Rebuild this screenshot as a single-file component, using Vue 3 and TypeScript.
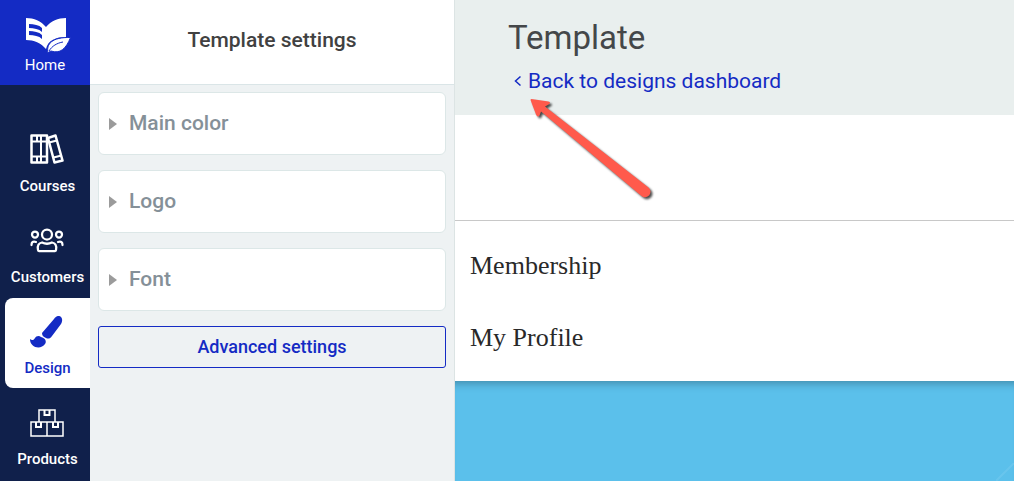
<script setup lang="ts">
interface NavItem {
  id: string
  label: string
  active?: boolean
}

const navItems: NavItem[] = [
  { id: 'courses', label: 'Courses' },
  { id: 'customers', label: 'Customers' },
  { id: 'design', label: 'Design', active: true },
  { id: 'products', label: 'Products' },
]

const sections: string[] = ['Main color', 'Logo', 'Font']
const menuLinks: string[] = ['Membership', 'My Profile']
</script>

<template>
  <div class="page">
    <nav class="sidebar">
      <a class="home" href="#">
        <svg class="home-icon" width="45" height="37" viewBox="0 0 45 37" aria-hidden="true">
          <path fill="#fff" d="M0 1C8 1 15 4 20 10C25 4 32 1 40 1V20C30 20 22 23 20 32C15 26 8 23 0 23Z" />
          <path fill="#142bc4" d="M3 7C8 7 13 8 16 11V15C13 12 8 11 3 11ZM3 14C8 14 13 15 16 18V22C13 19 8 18 3 18Z" />
          <path fill="#fff" stroke="#142bc4" stroke-width="1" d="M22 36C20 27 26 20 44.500 20.500C40 32 34 37 25 34C23.500 34.500 23 35 22 36Z" />
          <path fill="none" stroke="#142bc4" stroke-width="1" d="M23 34C26 29 31 26 37 25" />
        </svg>
        <span>Home</span>
      </a>
      <div class="nav-list">
        <a v-for="item in navItems" :key="item.id" class="nav-item" :class="{ active: item.active }" href="#">
          <svg v-if="item.id === 'courses'" class="icon" width="34" height="32" viewBox="0 0 34 32" fill="none" stroke="#fff" stroke-width="2" stroke-linejoin="round" aria-hidden="true">
            <path stroke-width="2.500" d="M1.500 1.500H17V28.500H1.500Z" />
            <path d="M11 1.500V28.500M7 1.500V7M7 23V28.500M1 7.500H17M1 22.500H17" />
            <path stroke-width="2.500" d="M18 4L25.500 1.500L32.500 26.500L24.500 28.500Z" />
            <path d="M19 8.500L27 6.500M23.500 23.500L31.500 21.500" />
          </svg>
          <svg v-else-if="item.id === 'customers'" class="icon" width="34" height="32" viewBox="0 0 34 32" fill="none" stroke="#fff" stroke-width="2.250" stroke-linecap="round" aria-hidden="true">
            <circle cx="17" cy="9.500" r="5" />
            <circle cx="5" cy="9.500" r="3" />
            <circle cx="29" cy="9.500" r="3" />
            <path d="M8 25C7 20 9 18 12 17.500C15 19 19 19 22 17.500C25 18 27 20 26 25Q26 26 25 26H9Q8 26 8 25Z" />
            <path d="M1.500 20C1.500 17 3 16 6 17M32.500 20C32.500 17 31 16 28 17" />
          </svg>
          <svg v-else-if="item.id === 'design'" class="icon" width="34" height="32" viewBox="0 0 34 32" fill="#142bc4" aria-hidden="true">
            <path d="M12 17L24 3C26 0 29 -1 31 1C33 3 32 6 31 8L22 20C20 23 18 23 16 22C13 21 12 19 12 17Z" />
            <path d="M0 23C2 25 4 24 5 22C6 20 9 19 11 21C15 22 17 25 15 28C11 34 0 32 0 23Z" />
          </svg>
          <svg v-else class="icon" width="34" height="32" viewBox="0 0 34 32" fill="none" stroke="#fff" stroke-width="2" aria-hidden="true">
            <path stroke-width="1.500" d="M9 15V3H25V15M1 15H33V29H1ZM17 15V29" />
            <path d="M14.500 3V8H19.500V3M6 15V20H11V15M23 15V20H28V15" />
          </svg>
          <span>{{ item.label }}</span>
        </a>
      </div>
    </nav>

    <aside class="settings">
      <header class="settings-head"><h2>Template settings</h2></header>
      <div class="settings-body">
        <button v-for="section in sections" :key="section" class="section" type="button">
          <svg width="8" height="12" viewBox="0 0 8 12" aria-hidden="true"><path fill="#9b9b9b" d="M0 0L8 6L0 12Z" /></svg>
          <span>{{ section }}</span>
        </button>
        <button class="advanced" type="button">Advanced settings</button>
      </div>
    </aside>

    <main class="main">
      <header class="main-head">
        <h1>Template</h1>
        <a class="back" href="#">
          <svg width="8" height="12" viewBox="0 0 8 12" fill="none" stroke="#142bc4" stroke-width="1.500" aria-hidden="true"><path d="M6.500 1.500L1.500 6L6.500 10.500" /></svg>
          <span>Back to designs dashboard</span>
        </a>
        <svg class="pointer" width="130" height="110" viewBox="0 0 130 110" aria-hidden="true">
          <path fill="#ff5a4c" d="M1.500 1L18.500 3.500Q21.500 4.500 18.500 6.500L15 8.500L118.500 89.500A5.500 5.500 0 0 1 111.500 98L11 13.500L9.500 17.500Q7.500 20 6 16.500L0.500 2Q0.500 1 1.500 1Z" />
        </svg>
      </header>
      <section class="preview">
        <div class="preview-bar"></div>
        <nav class="menu">
          <a v-for="link in menuLinks" :key="link" href="#">{{ link }}</a>
        </nav>
        <div class="hero">
          <svg width="18" height="18" viewBox="0 0 18 18" aria-hidden="true"><path stroke="#68c5ed" stroke-width="2" d="M0 18L18 0" /></svg>
        </div>
      </section>
    </main>
  </div>
</template>

<style>
body {
  margin: 0;
}
</style>

<style scoped>
.page {
  display: flex;
  min-height: 100vh;
  font-family: Roboto, "Liberation Sans", sans-serif;
  background: #fff;
}
.page * {
  box-sizing: border-box;
}
a {
  text-decoration: none;
}
h1,
h2 {
  margin: 0;
}
button {
  font-family: inherit;
  cursor: pointer;
}
svg {
  display: block;
  flex: none;
}
.sidebar {
  flex: none;
  width: 90px;
  background: #10204b;
  font-size: 15px;
  line-height: 20px;
}
.home {
  display: flex;
  flex-direction: column;
  align-items: center;
  padding: 17px 0 10px;
  gap: 1px;
  color: #fff;
  background: #142bc4;
}
.home-icon {
  margin-left: 6px;
}
.nav-list {
  display: flex;
  flex-direction: column;
  gap: 1px;
  padding: 31px 0 1px 5px;
}
.nav-item {
  display: flex;
  flex-direction: column;
  align-items: center;
  gap: 10px;
  padding: 18px 0 10px;
  border-radius: 8px 0 0 8px;
  color: #fff;
  font-weight: 500;
}
.icon {
  margin-right: 1px;
}
.nav-item.active {
  background: #fff;
  color: #142bc4;
}
.settings {
  flex: none;
  width: 365px;
  border-right: 1px solid #dce4e4;
  background: #eef2f3;
}
.settings-head {
  padding: 26px 0 30px;
  background: #fff;
  border-bottom: 1px solid #dae5e7;
  text-align: center;
}
.settings-head h2 {
  font-size: 21px;
  line-height: 28px;
  font-weight: 500;
  color: #414141;
}
.settings-body {
  display: flex;
  flex-direction: column;
  gap: 15px;
  padding: 7px 8px;
}
.section {
  display: flex;
  align-items: center;
  gap: 12px;
  padding: 17px 10px;
  border: 1px solid #dce7e7;
  border-radius: 6px;
  background: #fff;
  color: #859098;
  font-size: 21px;
  font-weight: 500;
  line-height: 27px;
}
.advanced {
  padding: 8px;
  border: 1px solid #142bc4;
  border-radius: 3px;
  background: transparent;
  color: #142bc4;
  font-size: 18px;
  font-weight: 500;
  line-height: 24px;
}
.main {
  flex: 1;
  min-width: 0;
  display: flex;
  flex-direction: column;
}
.main-head {
  position: relative;
  padding: 17px 53px 20px;
  background: #e9efee;
}
h1 {
  font-size: 33px;
  line-height: 42px;
  font-weight: 400;
  color: #444749;
}
.back {
  display: inline-flex;
  align-items: center;
  gap: 6px;
  margin-top: 8px;
  padding-left: 6px;
  color: #142bc4;
  font-size: 21px;
  line-height: 28px;
  vertical-align: top;
}
.pointer {
  position: absolute;
  left: 75px;
  top: 98px;
  filter: drop-shadow(2px 2px 1px rgba(0, 0, 0, 0.7));
}
.preview {
  flex: 1;
  display: flex;
  flex-direction: column;
}
.preview-bar {
  height: 106px;
  border-bottom: 1px solid #c8c8c8;
}
.menu {
  display: flex;
  flex-direction: column;
  gap: 40px;
  padding: 29px 15px 27px;
}
.menu a {
  color: #292929;
  font-family: Georgia, "Liberation Serif", serif;
  font-size: 26px;
  line-height: 32px;
}
.hero {
  flex: 1;
  display: flex;
  align-items: flex-end;
  justify-content: flex-end;
  min-height: 100px;
  background: #5bc0eb;
  box-shadow: inset 0 10px 10px -8px rgba(0, 0, 0, 0.3);
}
</style>
